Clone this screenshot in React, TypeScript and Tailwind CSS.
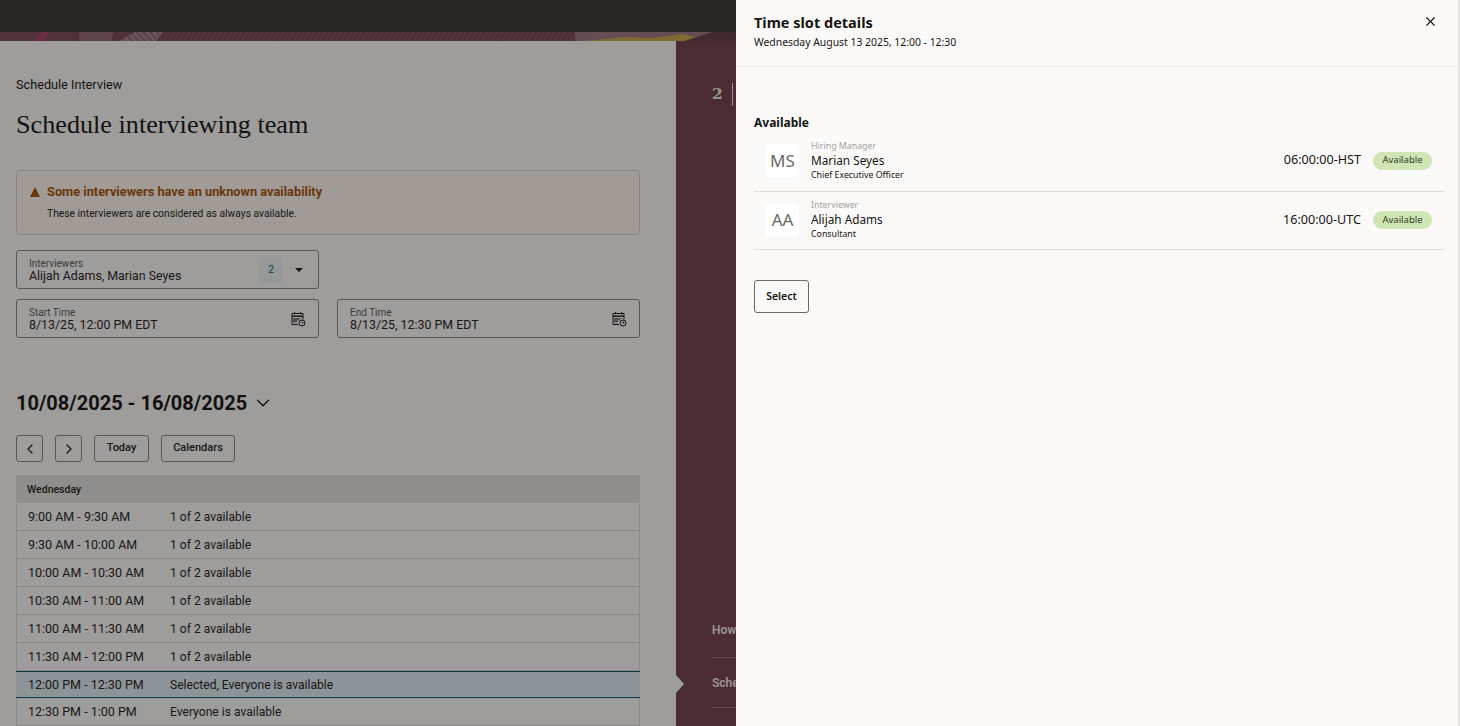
import { ChevronDown, ChevronLeft, ChevronRight, X } from "lucide-react";

const SLOTS = [
  { time: "9:00 AM - 9:30 AM", status: "1 of 2 available" },
  { time: "9:30 AM - 10:00 AM", status: "1 of 2 available" },
  { time: "10:00 AM - 10:30 AM", status: "1 of 2 available" },
  { time: "10:30 AM - 11:00 AM", status: "1 of 2 available" },
  { time: "11:00 AM - 11:30 AM", status: "1 of 2 available" },
  { time: "11:30 AM - 12:00 PM", status: "1 of 2 available" },
  { time: "12:00 PM - 12:30 PM", status: "Selected, Everyone is available", selected: true },
  { time: "12:30 PM - 1:00 PM", status: "Everyone is available" },
];

const PEOPLE = [
  { initials: "MS", role: "Hiring Manager", name: "Marian Seyes", title: "Chief Executive Officer", time: "06:00:00-HST" },
  { initials: "AA", role: "Interviewer", name: "Alijah Adams", title: "Consultant", time: "16:00:00-UTC" },
];

function Banner() {
  return (
    <svg className="block h-[9px] w-full" viewBox="0 0 736 9" preserveAspectRatio="none" aria-hidden>
      <defs>
        <pattern id="hatch-dark" width="5" height="6" patternUnits="userSpaceOnUse" patternTransform="rotate(18)">
          <rect width="5" height="6" fill="#7a4955" />
          <path d="M1 0v6M3.5 0v6" stroke="#966a76" strokeWidth="0.5" />
        </pattern>
        <pattern id="hatch-light" width="3" height="4" patternUnits="userSpaceOnUse" patternTransform="rotate(-25)">
          <rect width="3" height="4" fill="#94707a" />
          <path d="M1 0v4" stroke="#bca4a9" strokeWidth="0.7" />
        </pattern>
      </defs>
      <rect width="736" height="9" fill="#7f4e5b" />
      <path d="M17 9l4-9h4l-3 9z" fill="#a94a6c" />
      <path d="M40 0h17l-1 9H40z" fill="#9a6e79" />
      <path d="M60 9l8-9h14l-3 9z" fill="url(#hatch-light)" />
      <rect x="82" width="208" height="9" fill="url(#hatch-dark)" />
      <path d="M290 0h95v9h-95z" fill="#a27a85" />
      <path d="M295 9l20-4 14 1 15-4 14 7z" fill="#c9a94f" />
      <path d="M345 9l14-9h17l2 9z" fill="#6f414c" />
      <path d="M378 0h6l4 9h-7z" fill="#bca3a7" />
      <path d="M385 0h27v9h-27z" fill="#a27a85" />
      <path d="M412 0h36l20 9h-46z" fill="#c9a94f" />
      <path d="M450 0h30v9h-16z" fill="#986e7b" />
      <path d="M482 0h-6l-8 9h5zM470 3l7 6h5l-9-9z" fill="#c9a94f" />
      <path d="M484 0h16v9h-16z" fill="#a27a85" />
      <path d="M506 0h24l4 9h-34z" fill="#c2acac" />
      <path d="M530 0h26l-3 9h-19z" fill="#7a4a56" />
      <path d="M558 0h6l-3 9h-5z" fill="#a94a6c" />
      <path d="M564 0h14l2 9h-19z" fill="#6f414c" />
      <path d="M578 0h25l-3 9h-20z" fill="#a27a85" />
      <path d="M603 0h20l3 9h-26z" fill="url(#hatch-light)" />
      <rect x="623" width="113" height="9" fill="url(#hatch-dark)" />
    </svg>
  );
}

function CalendarClock() {
  return (
    <svg width="16" height="16" viewBox="0 0 16 16" fill="none" stroke="#1f1c1a" strokeWidth="1" aria-hidden>
      <path d="M8 13.5H2V2.5h11v6" />
      <path d="M2 5.2h11" strokeWidth="1.4" />
      <path d="M4.5 1v2.4M10.5 1v2.4" />
      <path d="M4 7v4.5M6 7v4.5M8 7v2.5M10 7v1" strokeWidth="1.1" />
      <circle cx="12" cy="12" r="3" fill="#fbf9f8" />
      <path d="M12 10.5V12h1.4" />
    </svg>
  );
}

function Field({ label, value, children }: { label: string; value: string; children?: React.ReactNode }) {
  return (
    <div className="flex h-[39px] flex-1 items-center justify-between rounded-[3px] border border-[#8b8885] pl-3 pr-[12px]">
      <div className="min-w-0">
        <div className="text-[10px] leading-[12px] text-[#5f5c59]">{label}</div>
        <div className="text-[12.4px] leading-[12px] text-[#2b2826]">{value}</div>
      </div>
      {children}
    </div>
  );
}

function NavButton({ children, className }: { children: React.ReactNode; className: string }) {
  return (
    <button
      type="button"
      className={`flex h-[27px] items-center justify-center rounded-[3px] border border-[#8b8885] text-[11px] font-medium text-[#2b2826] ${className}`}
    >
      {children}
    </button>
  );
}

export default function App() {
  return (
    <div className="relative h-[726px] w-[1460px] overflow-hidden bg-[#fbf9f8] font-['Roboto',sans-serif]">
      <div className="h-8 bg-[#433d39]" />
      <Banner />
      <div className="flex h-[685px]">
        <main className="w-[676px] shrink-0 pl-4 pr-9">
          <div className="mt-[36px] text-[12.7px] leading-4 text-[#1f1c1a]">Schedule Interview</div>
          <h1 className="mt-[17px] font-['Liberation_Serif',serif] text-[26.2px] leading-[30px] text-[#1f1c1a]">
            Schedule interviewing team
          </h1>

          <div className="mt-[30px] h-[65px] rounded-[4px] border border-[#d9d2cd] bg-[#fdf6f0] px-[13px] pt-[13px]">
            <div className="flex items-center gap-[7px]">
              <svg width="10" height="10" viewBox="0 0 10 10" aria-hidden>
                <path d="M5 0L10 10H0z" fill="#a8570f" />
              </svg>
              <span className="text-[12.8px] font-bold leading-4 text-[#a8570f]">Some interviewers have an unknown availability</span>
            </div>
            <p className="mt-[7px] pl-[17px] text-[10.3px] leading-[14px] text-[#2b2826]">These interviewers are considered as always available.</p>
          </div>

          <div className="mt-[15px] flex w-[303px]">
            <Field label="Interviewers" value="Alijah Adams, Marian Seyes">
              <div className="flex items-center">
                <span className="flex h-[26px] w-[24px] items-center justify-center rounded-[3px] bg-[#f0f2f3] text-[10px] text-[#11618c]">2</span>
                <svg className="ml-[12px] mr-[3px]" width="8" height="4" viewBox="0 0 8 4" aria-hidden>
                  <path d="M0 0h8L4 4z" fill="#1f1c1a" />
                </svg>
              </div>
            </Field>
          </div>

          <div className="mt-[10px] flex gap-[18px]">
            <Field label="Start Time" value="8/13/25, 12:00 PM EDT">
              <CalendarClock />
            </Field>
            <Field label="End Time" value="8/13/25, 12:30 PM EDT">
              <CalendarClock />
            </Field>
          </div>

          <div className="mt-[51px] flex h-[28px] items-center gap-[5px]">
            <span className="text-[20px] font-bold text-[#1f1c1a]">10/08/2025 - 16/08/2025</span>
            <ChevronDown className="h-[22px] w-[22px] text-[#1f1c1a]" strokeWidth={1.4} />
          </div>

          <div className="mt-[18px] flex gap-3">
            <NavButton className="w-[27px]"><ChevronLeft className="h-4 w-4" strokeWidth={2} /></NavButton>
            <NavButton className="w-[27px]"><ChevronRight className="h-4 w-4" strokeWidth={2} /></NavButton>
            <NavButton className="w-[55px]">Today</NavButton>
            <NavButton className="w-[74px]">Calendars</NavButton>
          </div>

          <div className="mt-[13px]">
            <div className="flex h-[28px] items-center bg-[#e4e1de] pl-[11px] pt-px text-[10.5px] font-medium text-[#2b2826]">Wednesday</div>
            {SLOTS.map((slot) => (
              <div
                key={slot.time}
                className={
                  slot.selected
                    ? "flex h-[27px] items-center border-y border-[#0f5a72] bg-[#dfeaf0] pl-3 pt-px text-[12.5px] text-[#2b2826]"
                    : "flex h-[28px] items-center border-x border-b border-[#dcd9d6] pl-[11px] pt-px text-[12.5px] text-[#2b2826]"
                }
              >
                <span className="w-[142px]">{slot.time}</span>
                <span className="text-[12.1px]">{slot.status}</span>
              </div>
            ))}
          </div>
        </main>

        <aside className="relative w-[60px] shrink-0 bg-[#774751] pl-9 text-[#f1e9e7]">
          <div className="mt-[41px] flex items-center">
            <span className="font-['DejaVu_Serif',serif] text-[15.5px] font-bold leading-6">2</span>
            <span className="ml-[9px] h-[23px] w-px bg-[#f1e9e7]" />
          </div>
          <div className="mt-[516px] whitespace-nowrap border-b border-[#9a747a] pb-[19px] text-[12px] font-semibold leading-4">How to schedule</div>
          <div className="mt-[17px] whitespace-nowrap border-b border-[#9a747a] pb-[16px] text-[12px] font-semibold leading-4">Schedule interview</div>
          <span className="absolute left-0 top-[634px] border-y-[9px] border-l-[8px] border-y-transparent border-l-[#fbf9f8]" />
        </aside>
      </div>

      <div className="absolute inset-0 bg-black/[0.37]" />

      <section className="absolute right-0 top-0 h-full w-[724px] border-r-2 border-[#e4e2e0] bg-[#fbf9f8] font-['Noto_Sans',sans-serif] text-[#161513]">
        <header className="relative h-[67px] border-b border-[#efedeb] pl-[18px] pt-[12px]">
          <h2 className="text-[14.5px] font-bold leading-5">Time slot details</h2>
          <p className="mt-[3px] text-[10.4px] leading-[15px]">Wednesday August 13 2025, 12:00 - 12:30</p>
          <X className="absolute right-[20px] top-[14px] h-[15px] w-[15px]" strokeWidth={1.7} />
        </header>

        <h3 className="ml-[18px] mt-[48px] text-[12px] font-bold leading-4">Available</h3>

        <div className="ml-[18px] mr-[14px] mt-[6px]">
          {PEOPLE.map((p, i) => (
            <div key={p.initials} className={`flex items-center border-b border-[#dfdddb] pl-3 pr-3 ${i === 0 ? "h-[55px] pb-[7px]" : "h-[58px] pb-[1px]"}`}>
              <div className="flex h-[33px] w-[33px] items-center justify-center rounded-[4px] bg-white text-[17px] text-[#6b6865]">{p.initials}</div>
              <div className="ml-[12px] flex-1">
                <div className="text-[8.8px] leading-[11px] text-[#a3a09d]">{p.role}</div>
                <div className="text-[11.8px] leading-[17px]">{p.name}</div>
                <div className="text-[8.8px] leading-[12px]">{p.title}</div>
              </div>
              <span className="text-[12.6px]">{p.time}</span>
              <span className="ml-[12px] flex h-[18px] w-[59px] items-center justify-center rounded-full bg-[#cfe5b4] text-[9.5px] text-[#2c3a22]">Available</span>
            </div>
          ))}
        </div>

        <button type="button" className="ml-[18px] mt-[30px] h-[33px] w-[55px] rounded-[3px] border border-[#6b6865] text-[10.5px] font-semibold">Select</button>
      </section>
    </div>
  );
}
